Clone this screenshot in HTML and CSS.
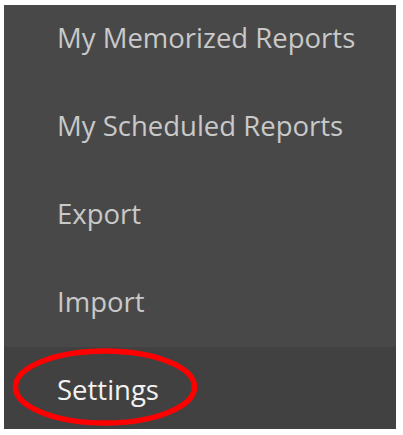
FILE: index.html
```html
<!DOCTYPE html>
<html>
<head>
<meta charset="utf-8">
<link rel="stylesheet" href="styles.css">
</head>
<body>
<nav class="panel">
  <ul class="menu">
    <li class="item"><span class="label">My Memorized Reports</span></li>
    <li class="item"><span class="label">My Scheduled Reports</span></li>
    <li class="item"><span class="label">Export</span></li>
    <li class="item"><span class="label">Import</span></li>
    <li class="item item-active">
      <span class="label">Settings</span>
      <svg class="highlight" width="186" height="80" viewBox="0 0 186 80">
        <ellipse cx="93" cy="39" rx="89.5" ry="36" fill="none" stroke="#ff0000" stroke-width="5.5"/>
      </svg>
    </li>
  </ul>
</nav>
</body>
</html>
```
FILE: styles.css
```css
html, body {
  margin: 0;
  padding: 0;
  background: #ffffff;
}
body {
  width: 403px;
  height: 435px;
  overflow: hidden;
}
.panel {
  margin: 5px 0 0 4px;
  width: 392px;
  height: 424px;
  background: #484848;
  overflow: hidden;
}
.menu {
  list-style: none;
  margin: -10px 0 0 0;
  padding: 0;
}
.item {
  position: relative;
  height: 88px;
  display: flex;
  align-items: center;
  padding-left: 53px;
  font-family: "Open Sans", sans-serif;
  font-size: 27.5px;
  color: #c9c9c9;
}
.item-active {
  background: #414141;
  color: #f2f2f2;
}
.label {
  display: block;
  line-height: 1;
  margin-top: -3px;
}
.highlight {
  position: absolute;
  left: 8px;
  top: 1px;
}
```
